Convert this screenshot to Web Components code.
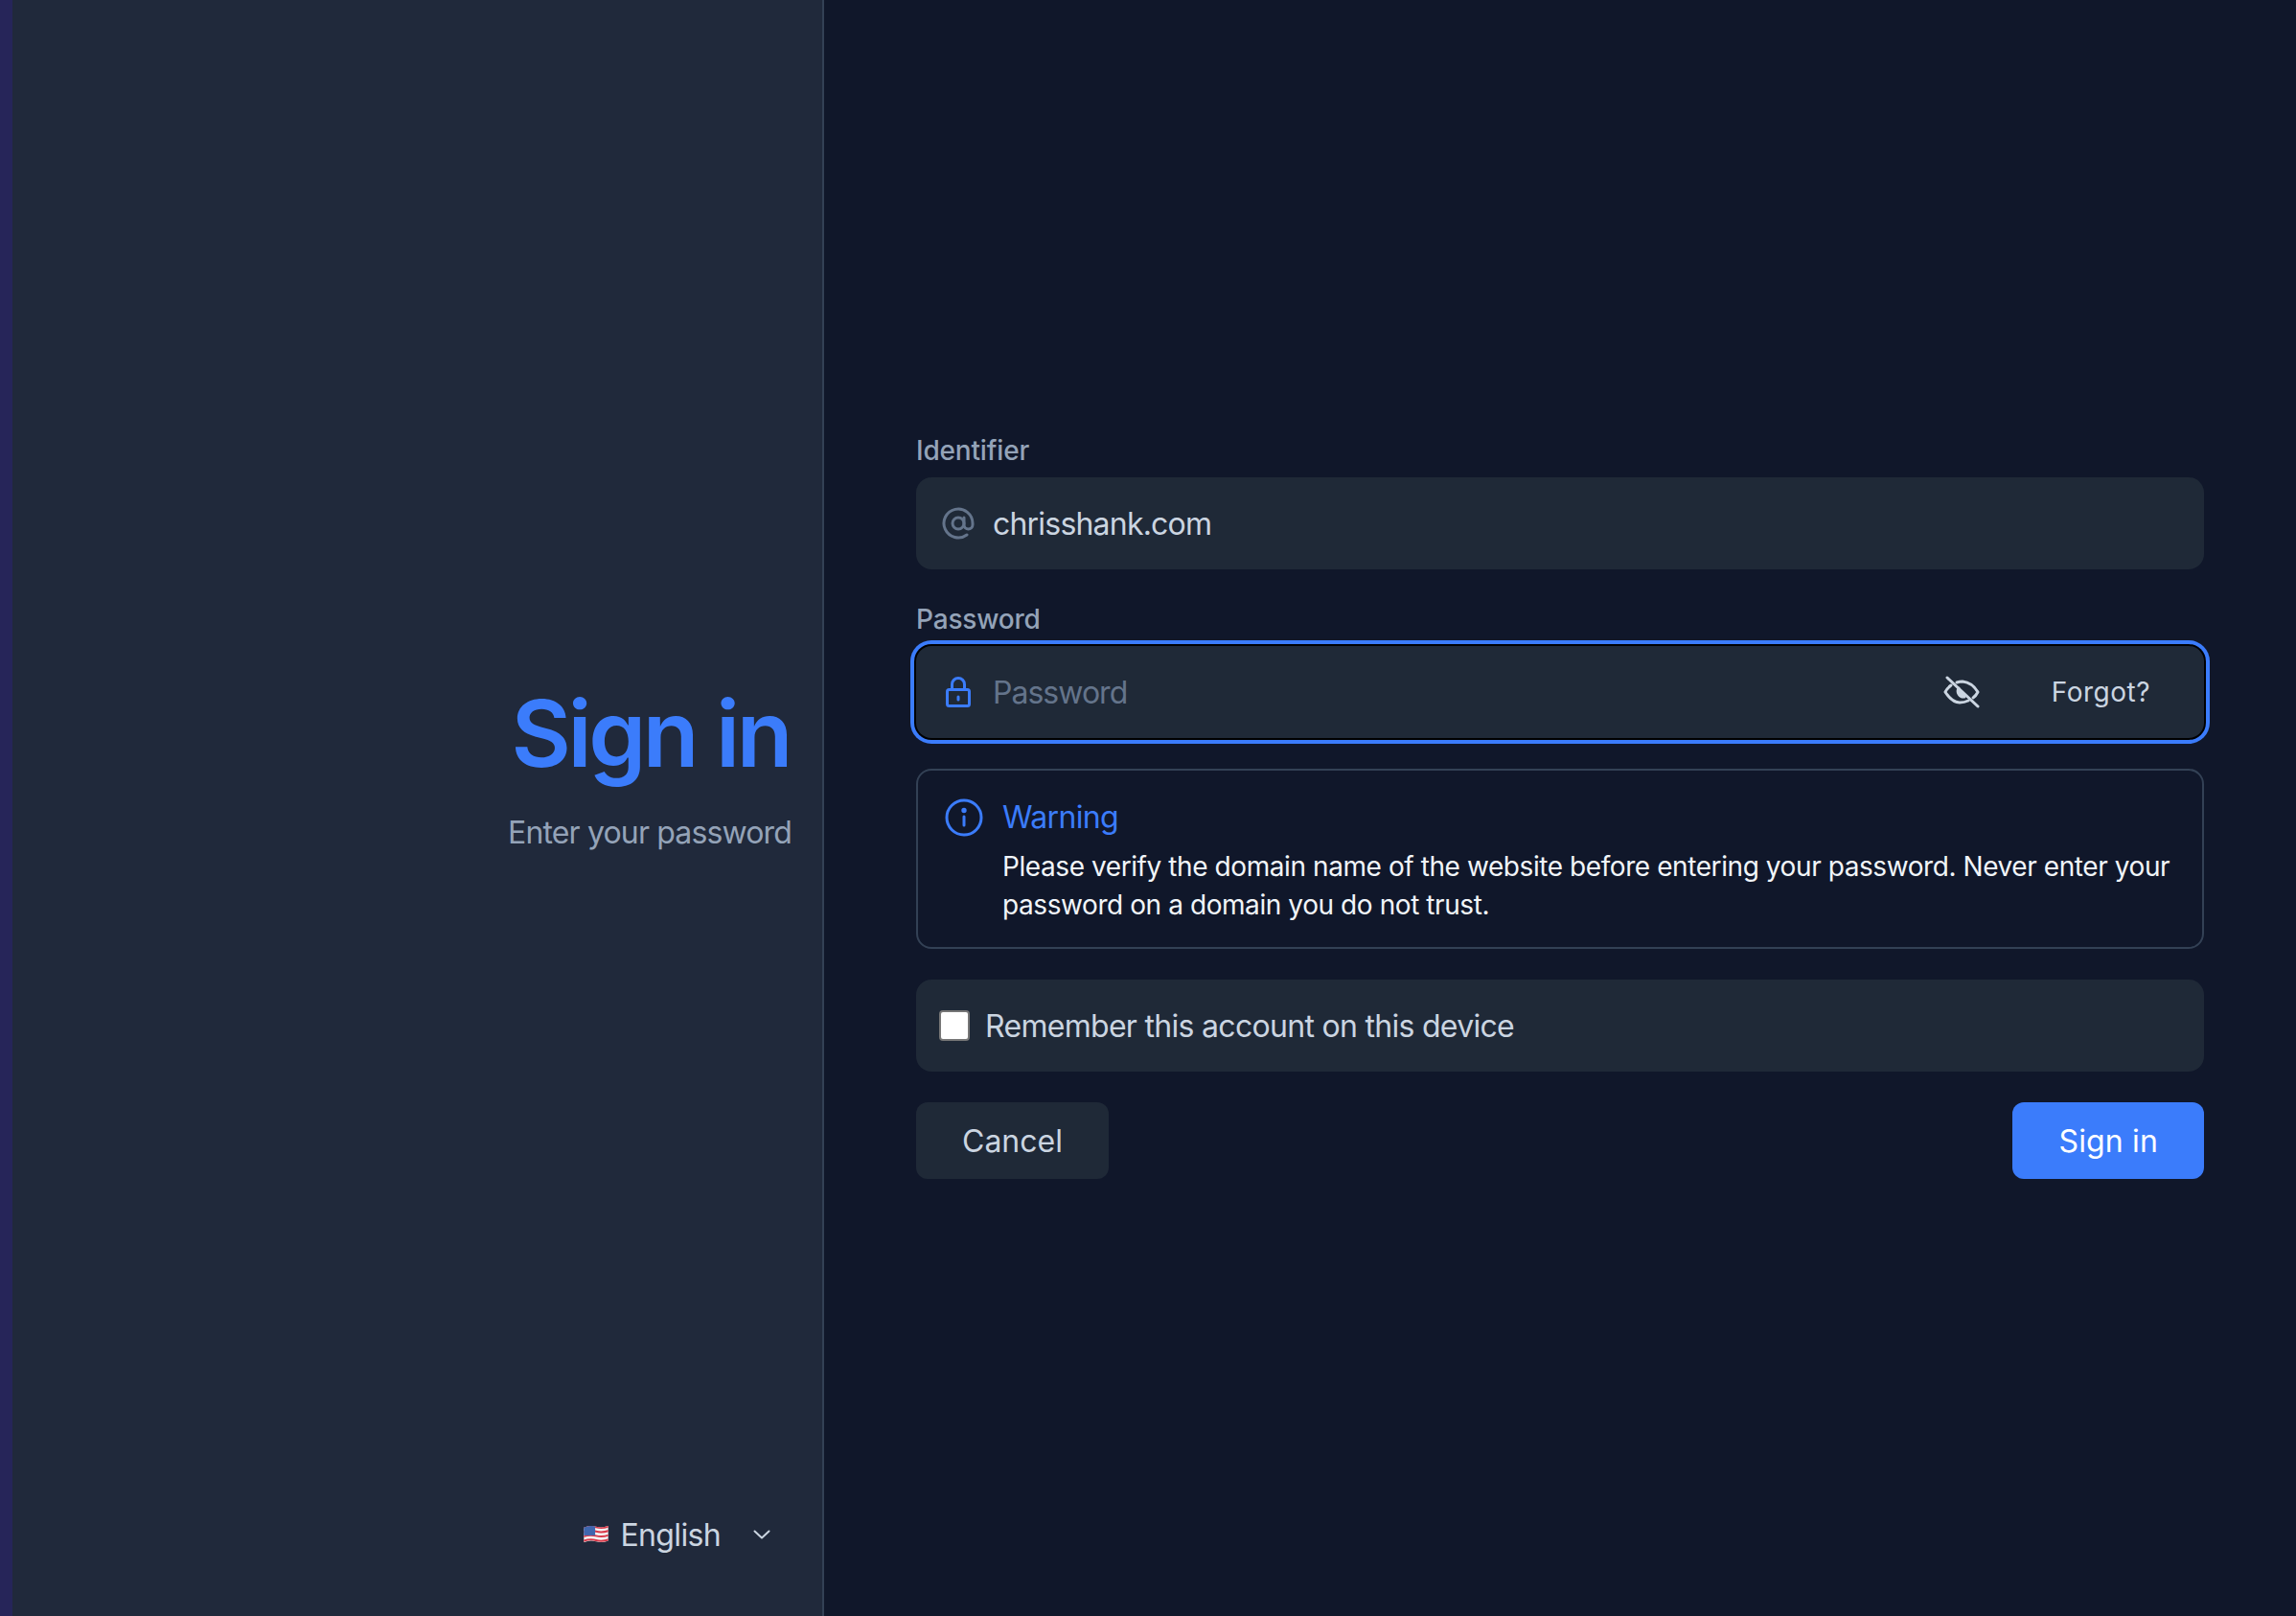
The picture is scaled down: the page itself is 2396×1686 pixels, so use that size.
<!DOCTYPE html>
<html><head><meta charset="utf-8"><style>
html,body{margin:0;height:100%;background:#10172a;}
body{font-family:Inter,"Liberation Sans",sans-serif;color:#cbd5e1;}
</style></head><body>
<template id="t-page"><style>
:host{display:grid;grid-template-columns:860px 1fr;height:1686px;}
</style><slot name="side"></slot><slot name="main"></slot></template>

<template id="t-side"><style>
:host{display:flex;flex-direction:column;position:relative;box-sizing:border-box;height:1686px;background:#20293b;border-right:2px solid #334155;padding-right:32px;text-align:right;}
.strip{position:absolute;left:0;top:0;bottom:0;width:13px;background:#262559;}
.mid{flex:1;display:flex;flex-direction:column;justify-content:center;align-items:flex-end;padding-top:27px;}
h1{margin:0 2px 0 0;font-size:96px;line-height:112px;font-weight:600;color:#3b7cfb;letter-spacing:-3.4px;}
p{margin:24px 0 0;font-size:32px;line-height:48px;color:#94a3b8;letter-spacing:-.85px;}
.foot{height:54px;margin-bottom:58px;}
</style><div class="strip"></div><div class="mid"><h1><slot name="title"></slot></h1><p><slot name="sub"></slot></p></div><div class="foot"><slot name="foot"></slot></div></template>

<template id="t-lang"><style>
:host{display:flex;justify-content:flex-end;align-items:center;height:54px;font-size:32px;color:#cbd5e1;padding-right:22px;letter-spacing:-.65px;}
.f{width:28px;height:22px;margin-right:11px;display:block;}
.c{width:18px;height:10px;margin-left:34px;display:block;}
</style><svg class="f" viewBox="0 0 30 24"><defs><clipPath id="c"><path d="M1 4q7-3 14-1t14-1v17q-7 3-14 1t-14 1z"/></clipPath></defs><g clip-path="url(#c)"><rect width="30" height="24" fill="#f4f4f4"/><path d="M0 4.500q8-3 15-1t15-1M0 9.500q8-3 15-1t15-1M0 14.500q8-3 15-1t15-1M0 19.500q8-3 15-1t15-1" stroke="#d8394a" stroke-width="2.200" fill="none"/><rect x="0" y="1" width="14" height="12" fill="#3f66ae"/></g></svg><slot></slot><svg class="c" viewBox="0 0 18 10" fill="none" stroke="#cbd5e1" stroke-width="2" stroke-linecap="round" stroke-linejoin="round"><path d="M1.500 1.500L9 8.500l7.500-7"/></svg></template>

<template id="t-form"><style>
:host{display:flex;flex-direction:column;justify-content:center;box-sizing:border-box;height:1686px;padding:0 96px 6px;}
</style><slot></slot></template>

<template id="t-label"><style>
:host{display:block;font-size:28px;line-height:40px;font-weight:500;color:#94a3b8;margin-bottom:8px;letter-spacing:-.18px;}
</style><slot></slot></template>

<template id="t-field"><style>
:host{display:flex;align-items:center;box-sizing:border-box;height:96px;background:#1f2937;border-radius:16px;padding-left:24px;font-size:32px;color:#cbd5e1;margin-bottom:32px;letter-spacing:-.8px;}
:host([focus]){box-shadow:0 0 0 2px #000,0 0 0 6px #3b7cfb;}
.i{width:40px;display:flex;justify-content:center;margin-right:16px;}
.r{margin-left:auto;display:flex;align-items:center;font-size:28px;letter-spacing:.5px;}
</style><div class="i"><slot name="icon"></slot></div><slot></slot><div class="r"><slot name="right"></slot></div></template>

<template id="t-alert"><style>
:host{display:grid;grid-template-columns:40px 1fr;column-gap:20px;box-sizing:border-box;height:188px;border:2px solid #334155;border-radius:16px;padding:27px 28px 0 28px;margin:0 0 32px;}
.h{font-size:32px;line-height:44px;color:#3b7cfb;letter-spacing:-.65px;}
.b{font-size:28px;line-height:40px;color:#f1f5f9;margin-top:9px;letter-spacing:-.42px;}
.i{height:44px;display:flex;align-items:center;}
</style><div class="i"><slot name="icon"></slot></div><div><div class="h"><slot name="title"></slot></div><div class="b"><slot></slot></div></div></template>

<template id="t-check"><style>
:host{display:flex;align-items:center;box-sizing:border-box;height:96px;background:#1f2937;border-radius:16px;padding-left:24px;font-size:32px;color:#cbd5e1;margin-bottom:32px;letter-spacing:-.7px;}
.b{width:32px;height:32px;box-sizing:border-box;background:#fff;border:2px solid #767676;border-radius:4px;margin-right:16px;}
</style><div class="b"></div><slot></slot></template>

<template id="t-actions"><style>
:host{display:flex;justify-content:space-between;}
</style><slot></slot></template>

<template id="t-btn"><style>
:host{display:flex;align-items:center;justify-content:center;box-sizing:border-box;height:80px;padding:0 48px;border-radius:12px;background:#1f2937;color:#cbd5e1;font-size:32px;}
:host([primary]){background:#3b7cfb;color:#fff;letter-spacing:.15px;}
</style><slot></slot></template>

<x-page>
  <x-side slot="side">
    <span slot="title">Sign in</span>
    <span slot="sub">Enter your password</span>
    <x-lang slot="foot">English</x-lang>
  </x-side>
  <x-form slot="main">
    <x-label>Identifier</x-label>
    <x-field>
      <svg slot="icon" width="36" height="36" viewBox="0 0 24 24" fill="none" stroke="#64748b" stroke-width="2" stroke-linecap="round" stroke-linejoin="round" style="display:block"><circle cx="12" cy="12" r="4"/><path d="M16 8v5a3 3 0 0 0 6 0v-1a10 10 0 1 0-4 8"/></svg>
      chrisshank.com
    </x-field>
    <x-label>Password</x-label>
    <x-field focus>
      <svg slot="icon" width="28" height="32" viewBox="0 0 28 32" fill="none" stroke="#3b7cfb" stroke-width="3" stroke-linecap="round" stroke-linejoin="round" style="display:block"><rect x="2.500" y="13.500" width="23" height="17" rx="2"/><path d="M7.500 13.500V8a6.500 6.500 0 0 1 13 0v5.500"/><path d="M14 21v3"/></svg>
      <span style="color:#64748b;letter-spacing:-.98px">Password</span>
      <span slot="right" style="display:flex;align-items:center">
        <svg width="38" height="34" viewBox="0 0 38 34" fill="none" stroke="#cbd5e1" stroke-width="3" stroke-linecap="round" stroke-linejoin="round" style="display:block;margin-right:75px"><path d="M4 2l32 30"/><path d="M8 10q-4 3-6 7 7 11 15 11 5 0 9-2"/><path d="M14 7q3-1 6-1 10 1 16 11-2 4-5 6"/><path d="M16 13a6 6 0 0 0 6 9"/><path d="M16 14l6 5-1 3q-5-1-5-8z" fill="#cbd5e1" stroke-width="1"/></svg>
        <span style="margin-right:56px">Forgot?</span>
      </span>
    </x-field>
    <x-alert>
      <svg slot="icon" width="40" height="40" viewBox="0 0 40 40" fill="none" stroke="#3b7cfb" stroke-width="3" stroke-linecap="round" style="display:block"><circle cx="20" cy="20" r="18"/><path d="M20 19v9"/><circle cx="20" cy="12.500" r="1.200" fill="#3b7cfb"/></svg>
      <span slot="title">Warning</span>
      Please verify the domain name of the website before entering your password. Never enter your password on a domain you do not trust.
    </x-alert>
    <x-check>Remember this account on this device</x-check>
    <x-actions><x-btn>Cancel</x-btn><x-btn primary>Sign in</x-btn></x-actions>
  </x-form>
</x-page>

<script>
const reg=(name,id)=>customElements.define(name,class extends HTMLElement{
  constructor(){super();this.attachShadow({mode:'open'}).appendChild(document.getElementById(id).content.cloneNode(true));}
});
[['x-page','t-page'],['x-side','t-side'],['x-lang','t-lang'],['x-form','t-form'],['x-label','t-label'],['x-field','t-field'],['x-alert','t-alert'],['x-check','t-check'],['x-actions','t-actions'],['x-btn','t-btn']].forEach(a=>reg(...a));
</script>
</body></html>
